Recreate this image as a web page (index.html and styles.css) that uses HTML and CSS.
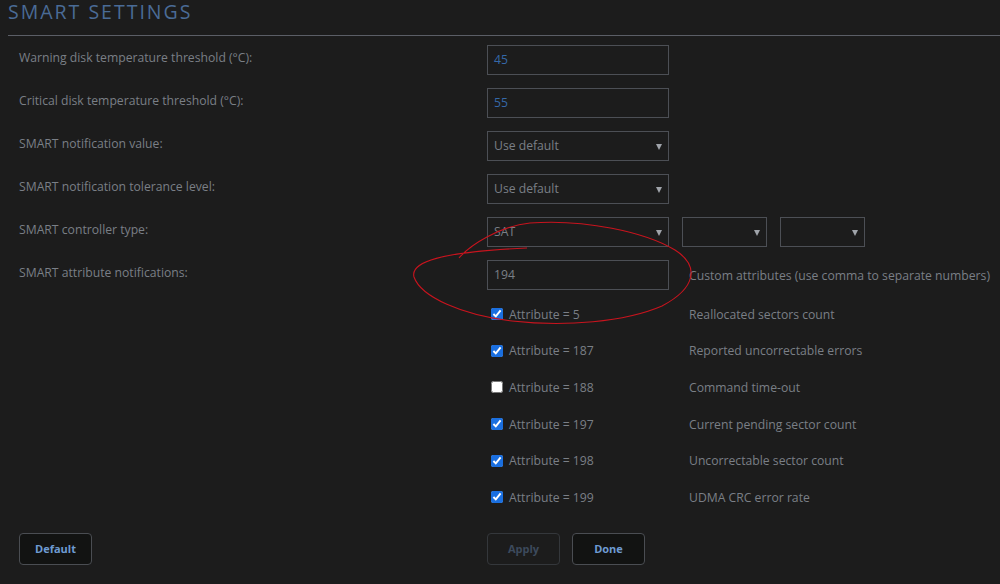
FILE: index.html
```html
<!DOCTYPE html>
<html lang="en">
<head>
    <meta charset="UTF-8">
    <title>SMART Settings</title>
    <link rel="stylesheet" href="styles.css">
</head>
<body>
    <div class="page">
        <h1 class="title">SMART SETTINGS</h1>
        <div class="form">
            <div class="row">
                <label class="label">Warning disk temperature threshold (°C):</label>
                <div class="ctl"><div class="input blue">45</div></div>
            </div>
            <div class="row">
                <label class="label">Critical disk temperature threshold (°C):</label>
                <div class="ctl"><div class="input blue">55</div></div>
            </div>
            <div class="row">
                <label class="label">SMART notification value:</label>
                <div class="ctl"><div class="select">Use default</div></div>
            </div>
            <div class="row">
                <label class="label">SMART notification tolerance level:</label>
                <div class="ctl"><div class="select">Use default</div></div>
            </div>
            <div class="row">
                <label class="label">SMART controller type:</label>
                <div class="ctl">
                    <div class="select">SAT</div>
                    <div class="select small"></div>
                    <div class="select small"></div>
                </div>
            </div>
            <div class="row">
                <label class="label">SMART attribute notifications:</label>
                <div class="ctl">
                    <div class="input">194</div>
                    <span class="note">Custom attributes (use comma to separate numbers)</span>
                </div>
            </div>

            <div class="checks">
                <div class="check-row">
                    <label class="check"><input type="checkbox" checked> Attribute = 5</label>
                    <span class="note">Reallocated sectors count</span>
                </div>
                <div class="check-row">
                    <label class="check"><input type="checkbox" checked> Attribute = 187</label>
                    <span class="note">Reported uncorrectable errors</span>
                </div>
                <div class="check-row">
                    <label class="check"><input type="checkbox"> Attribute = 188</label>
                    <span class="note">Command time-out</span>
                </div>
                <div class="check-row">
                    <label class="check"><input type="checkbox" checked> Attribute = 197</label>
                    <span class="note">Current pending sector count</span>
                </div>
                <div class="check-row">
                    <label class="check"><input type="checkbox" checked> Attribute = 198</label>
                    <span class="note">Uncorrectable sector count</span>
                </div>
                <div class="check-row">
                    <label class="check"><input type="checkbox" checked> Attribute = 199</label>
                    <span class="note">UDMA CRC error rate</span>
                </div>
            </div>

            <div class="buttons">
                <div class="btn-left"><button class="btn">Default</button></div>
                <div class="btn-right">
                    <button class="btn disabled">Apply</button>
                    <button class="btn">Done</button>
                </div>
            </div>
        </div>
    </div>

    <!-- red pen mark drawn over the screenshot -->
    <svg class="scribble" width="1000" height="584" viewBox="0 0 1000 584">
        <path d="M459 258 C470 245 500 226 530 223 C585 219 645 232 675 250 C700 266 696 288 662 306 C625 322 565 327 512 321 C462 315 421 297 414 277 C410 262 440 252 527 248" fill="none" stroke="#c8141e" stroke-width="1.1"/>
    </svg>
</body>
</html>
```

FILE: styles.css
```css
* {
    margin: 0;
    padding: 0;
    box-sizing: border-box;
}
html, body {
    background: #1c1c1c;
}
body {
    width: 1000px;
    height: 584px;
    overflow: hidden;
    font-family: "Open Sans", "Liberation Sans", sans-serif;
    font-size: 12.2px;
    color: #7a7f86;
    position: relative;
}
.page {
    padding-top: 1px;
}
.title {
    margin-left: 8px;
    font-size: 19.5px;
    font-weight: 400;
    letter-spacing: 2px;
    color: #4a6b96;
    line-height: 22px;
    height: 35px;
    border-bottom: 1px solid #5b5e66;
}
.form {
    padding: 9px 0 0 19px;
}
.row {
    display: grid;
    grid-template-columns: 468px 1fr;
    height: 43px;
}
.label {
    line-height: 26px;
}
.ctl {
    display: flex;
    align-items: center;
    height: 30px;
    gap: 13px;
}
.input, .select {
    width: 182px;
    height: 30px;
    border: 1px solid #4c4f55;
    padding: 0 6px;
    line-height: 28px;
    color: #7a7f86;
    flex: none;
}
.input.blue {
    color: #3568a8;
}
.select {
    position: relative;
}
.select::after {
    content: "";
    position: absolute;
    right: 6px;
    top: 12px;
    border-left: 3px solid transparent;
    border-right: 3px solid transparent;
    border-top: 6px solid #a0a4aa;
}
.select.small {
    width: 85px;
}
.note {
    margin-left: 7px;
    white-space: nowrap;
}
.checks {
    margin-top: -7px;
}
.check-row {
    display: grid;
    grid-template-columns: 468px 202px 1fr;
    height: 36.6px;
    align-items: center;
}
.check-row .check {
    grid-column: 2;
    display: flex;
    align-items: center;
    gap: 6px;
    padding-left: 4px;
}
.check-row .note {
    grid-column: 3;
    margin-left: 0;
}
.check input {
    width: 12px;
    height: 12px;
    accent-color: #1a6fe0;
}
.buttons {
    display: grid;
    grid-template-columns: 468px 1fr;
    margin-top: 17px;
}
.btn-right {
    display: flex;
    gap: 12px;
}
.btn {
    width: 73px;
    height: 32px;
    background: #121312;
    border: 1px solid #4a4d52;
    border-radius: 4px;
    color: #6e9bd2;
    font-family: "Open Sans", "Liberation Sans", sans-serif;
    font-size: 11px;
    font-weight: 700;
}
.btn.disabled {
    background: transparent;
    border-color: #34373b;
    color: #3c4a5c;
}
.scribble {
    position: absolute;
    left: 0;
    top: 0;
    pointer-events: none;
}
```
